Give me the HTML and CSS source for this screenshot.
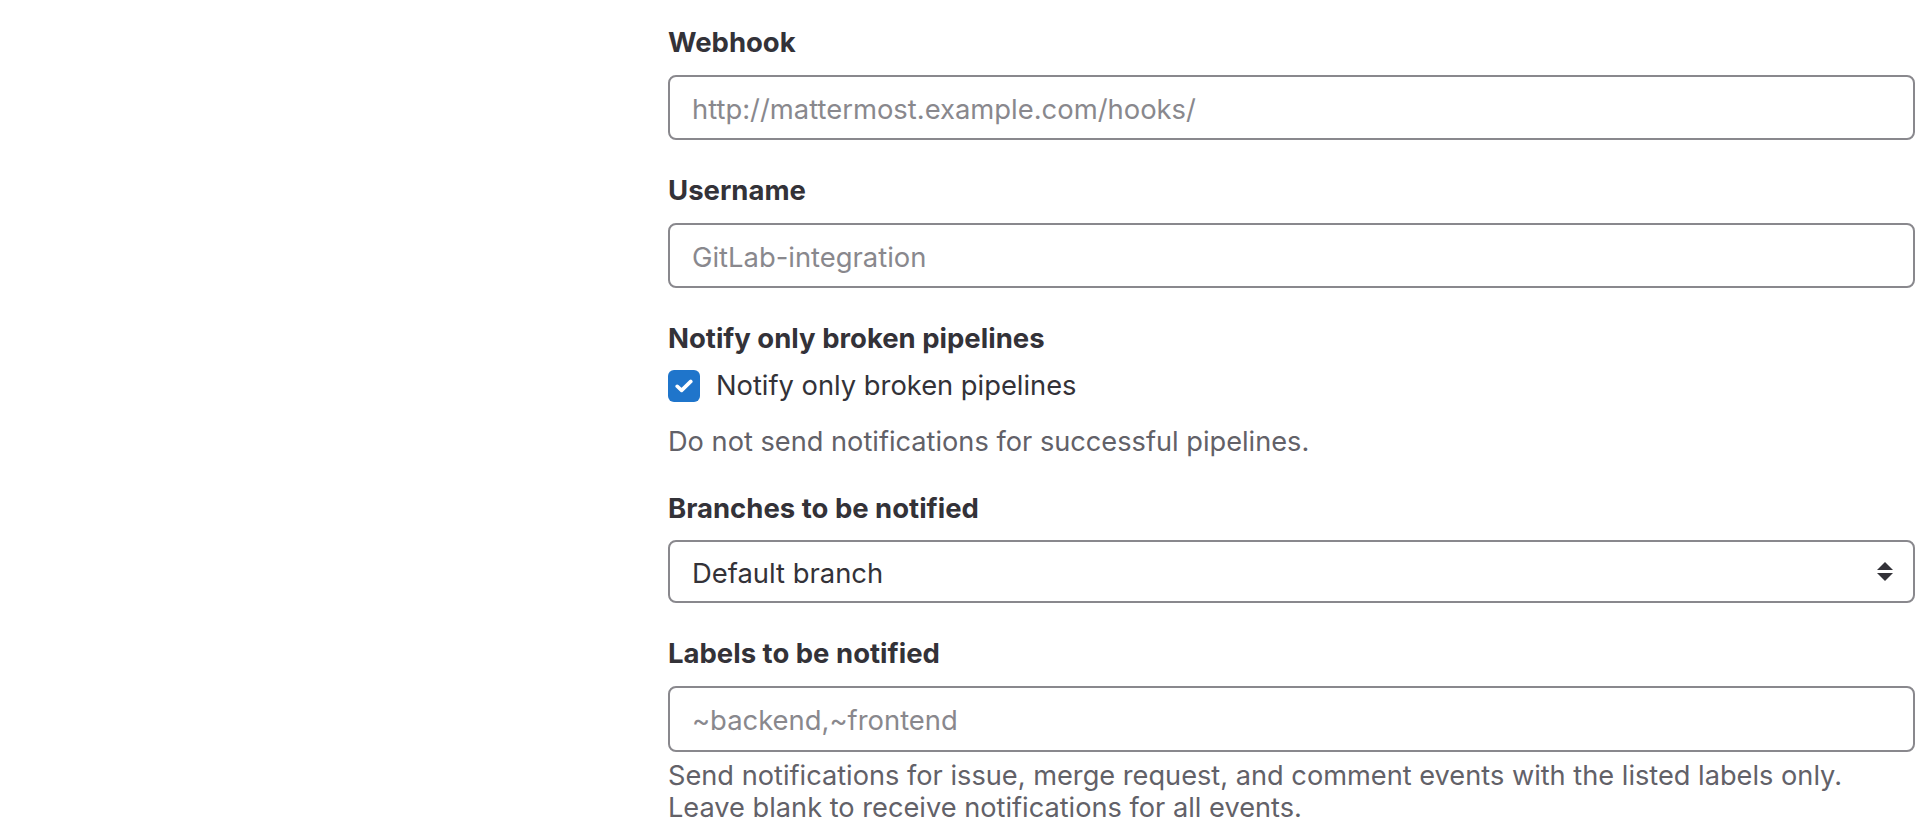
FILE: index.html
```html
<!DOCTYPE html>
<html lang="en">
<head>
<meta charset="utf-8">
<title>Mattermost integration</title>
<link rel="stylesheet" href="styles.css">
</head>
<body>
<div class="page">
  <div class="side"></div>
  <form class="form">
    <div class="group">
      <label class="label" for="webhook">Webhook</label>
      <input class="field" id="webhook" type="text" placeholder="http://mattermost.example.com/hooks/">
    </div>
    <div class="group">
      <label class="label" for="username">Username</label>
      <input class="field" id="username" type="text" placeholder="GitLab-integration">
    </div>
    <div class="group">
      <div class="label label-tight">Notify only broken pipelines</div>
      <label class="check-row">
        <span class="checkbox">
          <svg width="18" height="14" viewBox="0 0 18 14"><path d="M2.2 7.3 L6.6 11.4 L15.8 2.4" fill="none" stroke="#fff" stroke-width="3.6" stroke-linecap="round" stroke-linejoin="round"/></svg>
        </span>
        <span class="check-text">Notify only broken pipelines</span>
      </label>
      <p class="help help-check">Do not send notifications for successful pipelines.</p>
    </div>
    <div class="group">
      <label class="label label-select" for="branches">Branches to be notified</label>
      <div class="select-wrap">
        <select class="field select" id="branches">
          <option>Default branch</option>
        </select>
        <svg class="select-arrow" width="16" height="19" viewBox="0 0 16 19"><path d="M8 0 L16 8 L0 8 Z M0 11 L16 11 L8 19 Z" fill="#333238"/></svg>
      </div>
    </div>
    <div class="group">
      <label class="label" for="labels">Labels to be notified</label>
      <input class="field field-tall" id="labels" type="text" placeholder="~backend,~frontend">
      <p class="help help-field">Send notifications for issue, merge request, and comment events with the listed labels only.<br>Leave blank to receive notifications for all events.</p>
    </div>
  </form>
</div>
</body>
</html>
```
FILE: styles.css
```css
* { box-sizing: border-box; }
html, body {
  margin: 0;
  background: #ffffff;
}
body {
  font-family: Inter, "Noto Sans", "Liberation Sans", sans-serif;
  color: #333238;
  font-size: 27.4px;
  line-height: 40px;
}
.page {
  display: grid;
  grid-template-columns: 668px 1fr;
  padding-right: 17px;
}
.form {
  padding-top: 22px;
  margin: 0;
}
.group {
  margin-bottom: 30px;
}
.label {
  display: block;
  font-weight: 700;
  font-size: 27.5px;
  line-height: 40px;
  margin-bottom: 13px;
  color: #333238;
}
.label-tight { margin-bottom: 8px; }
.label-select { margin-bottom: 12px; }
.field {
  display: block;
  width: 100%;
  height: 65px;
  border: 2px solid #89888d;
  border-radius: 8px;
  padding: 2px 20px 0 22px;
  font-family: inherit;
  font-size: 27.4px;
  color: #333238;
  background: #fff;
  outline: none;
}
.field-tall { height: 66px; }
.field::placeholder { color: #89888d; opacity: 1; }
.select-wrap { position: relative; }
.select {
  appearance: none;
  -webkit-appearance: none;
  height: 63px;
}
.select-arrow {
  position: absolute;
  right: 22px;
  top: 22px;
}
.check-row {
  display: flex;
  align-items: center;
  gap: 16px;
  height: 40px;
  font-size: 27.3px;
}
.checkbox {
  width: 32px;
  height: 32px;
  border-radius: 6px;
  background: #1f75cb;
  display: flex;
  align-items: center;
  justify-content: center;
}
.checkbox svg { display: block; }
.help {
  margin: 0;
  color: #626168;
  font-size: 27.2px;
  line-height: 32px;
}
.help-check { margin-top: 20px; }
.help-field { margin-top: 8px; }
```
